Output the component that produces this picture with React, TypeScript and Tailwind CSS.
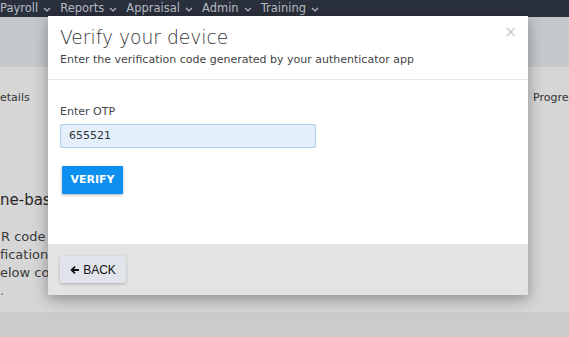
import React from 'react';

const navItems = ['Payroll', 'Reports', 'Appraisal', 'Admin', 'Training'];

const Chevron = () => (
  <svg width="8" height="5" viewBox="0 0 8 5" className="ml-[5px] mt-[2px]">
    <path d="M1 1l3 3 3-3" fill="none" stroke="currentColor" strokeWidth="1.2" />
  </svg>
);

const App: React.FC = () => {
  return (
    <div className="relative w-[569px] h-[337px] overflow-hidden bg-[#d6d6d6] font-['DejaVu_Sans',sans-serif]">
      {/* Page behind the dialog (dimmed) */}
      <div className="flex h-[17px] items-center gap-[9px] bg-[#2a303c] text-[11.5px] text-[#b9bdc3]">
        {navItems.map((n) => (
          <div key={n} className="flex items-center">
            <span>{n}</span>
            <Chevron />
          </div>
        ))}
      </div>
      <div className="h-[50px] bg-[#c6c9cc]" />
      <div className="flex h-[245px] justify-between text-[#333]">
        <div className="flex flex-col items-start whitespace-nowrap">
          <div className="mt-[23px] text-[11px]">etails</div>
          <div className="mt-[82px] text-[15px] text-[#262626]">ne-based</div>
          <div className="mt-[17px] text-[13px] leading-[18px] text-[#3a3a3a]">
            <div className="ml-[1px]">R code with</div>
            <div>fication code</div>
            <div>elow code</div>
            <div className="text-[#3b6ea5]">.</div>
          </div>
        </div>
        <div className="mt-[23px] w-[36px] overflow-hidden whitespace-nowrap text-[11px]">Progres</div>
      </div>
      <div className="h-[25px] bg-[#c9cbcd]" />

      {/* Dialog */}
      <div className="absolute left-[48px] top-[16px] flex w-[480px] flex-col bg-white shadow-[0_4px_14px_rgba(0,0,0,0.35)]">
        <div className="relative border-b border-[#e6e6e6] px-[12px] pt-[10px] pb-[12px]">
          <div className="text-[18.7px] font-extralight leading-[24px] text-[#333]">Verify your device</div>
          <div className="mt-[2px] text-[11px] leading-[15px] text-[#444]">
            Enter the verification code generated by your authenticator app
          </div>
          <div className="absolute right-[11px] top-[9px] text-[15px] leading-none text-[#c8c8c8]">×</div>
        </div>
        <div className="flex h-[164px] flex-col items-start px-[12px] pt-[24px]">
          <div className="text-[11px] leading-[15px] text-[#444]">Enter OTP</div>
          <div className="mt-[5px] flex h-[24px] w-[256px] items-center rounded-[2px] border border-[#a9cff0] bg-[#e3f0fb] px-[8px] text-[11px] text-[#333]">
            655521
          </div>
          <button className="mt-[18px] ml-[2px] h-[28px] w-[61px] rounded-[1px] bg-[#0d8fef] text-[11px] font-bold text-white shadow-[0_1px_3px_rgba(0,0,0,0.3)]">
            VERIFY
          </button>
        </div>
        <div className="flex h-[51px] items-center bg-[#e3e3e3] px-[12px]">
          <button className="flex h-[27px] w-[66px] items-center justify-center gap-[3px] rounded-[2px] bg-[#e1e4ea] font-['Liberation_Sans',sans-serif] text-[12px] text-[#111] shadow-[0_1px_3px_rgba(0,0,0,0.25)]">
            <svg width="10" height="10" viewBox="0 0 10 10">
              <path d="M9 5H2.2M5 1.6L1.6 5 5 8.4" fill="none" stroke="#111" strokeWidth="1.8" />
            </svg>
            BACK
          </button>
        </div>
      </div>
    </div>
  );
};

export default App;
